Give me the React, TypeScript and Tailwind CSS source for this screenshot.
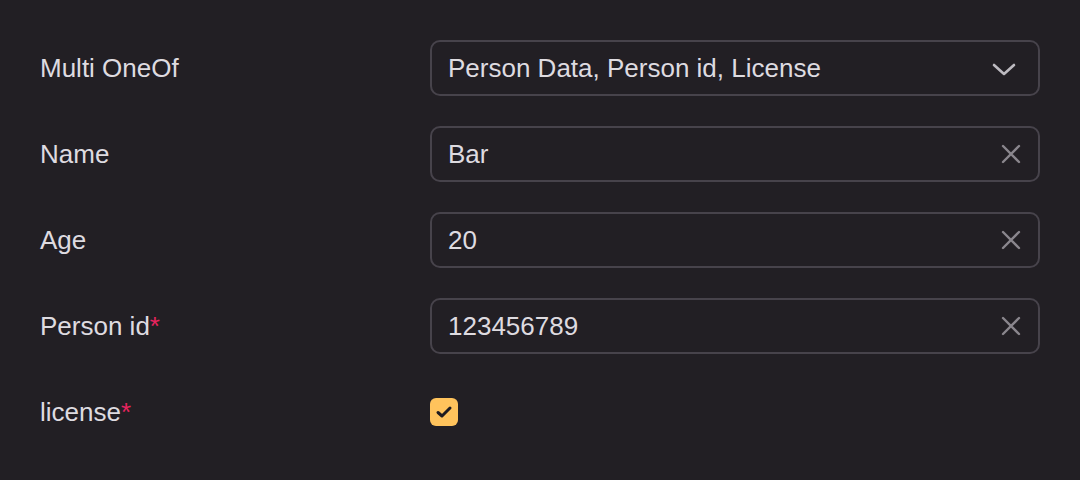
import React from "react"

const XIcon = () => (
  <svg width="20" height="20" viewBox="0 0 20 20" fill="none" stroke="#8a868d" strokeWidth="2.4" strokeLinecap="round">
    <path d="M2 2 L18 18 M18 2 L2 18" />
  </svg>
)

const Chevron = () => (
  <svg width="24" height="14" viewBox="0 0 24 14" fill="none" stroke="#bdbac0" strokeWidth="2.6" strokeLinecap="round" strokeLinejoin="round">
    <path d="M2 3 L12 12 L22 3" />
  </svg>
)

const Label = ({ text, required }: { text: string; required?: boolean }) => (
  <div className="w-[390px] shrink-0 text-[26px] text-[#dedbe0]">
    {text}
    {required && <span className="text-[#e8245f]">*</span>}
  </div>
)

const Field = ({ value, dropdown }: { value: string; dropdown?: boolean }) => (
  <div className="flex h-[56px] w-[610px] items-center justify-between rounded-[10px] border-2 border-[#47434b] pl-[16px] pr-[16px]">
    <span className="text-[26px] text-[#dedbe0]">{value}</span>
    {dropdown ? (
      <span className="mr-[6px] mt-[2px] flex">
        <Chevron />
      </span>
    ) : (
      <span className="mr-[1px] flex">
        <XIcon />
      </span>
    )}
  </div>
)

export default function App() {
  return (
    <div
      className="h-[480px] w-[1080px] bg-[#221f24] px-[40px] pt-[40px]"
      style={{ fontFamily: '"Liberation Sans", Arial, sans-serif' }}
    >
      <div className="flex flex-col gap-[30px]">
        <div className="flex items-center">
          <Label text="Multi OneOf" />
          <Field value="Person Data, Person id, License" dropdown />
        </div>
        <div className="flex items-center">
          <Label text="Name" />
          <Field value="Bar" />
        </div>
        <div className="flex items-center">
          <Label text="Age" />
          <Field value="20" />
        </div>
        <div className="flex items-center">
          <Label text="Person id" required />
          <Field value="123456789" />
        </div>
        <div className="flex h-[56px] items-center">
          <Label text="license" required />
          <div className="flex h-[28px] w-[28px] items-center justify-center rounded-[6px] bg-[#ffc35c]">
            <svg width="18" height="18" viewBox="0 0 18 18" fill="none" stroke="#1e1b20" strokeWidth="3" strokeLinecap="round" strokeLinejoin="round">
              <path d="M3 9.5 L7 13 L15 5" />
            </svg>
          </div>
        </div>
      </div>
    </div>
  )
}
